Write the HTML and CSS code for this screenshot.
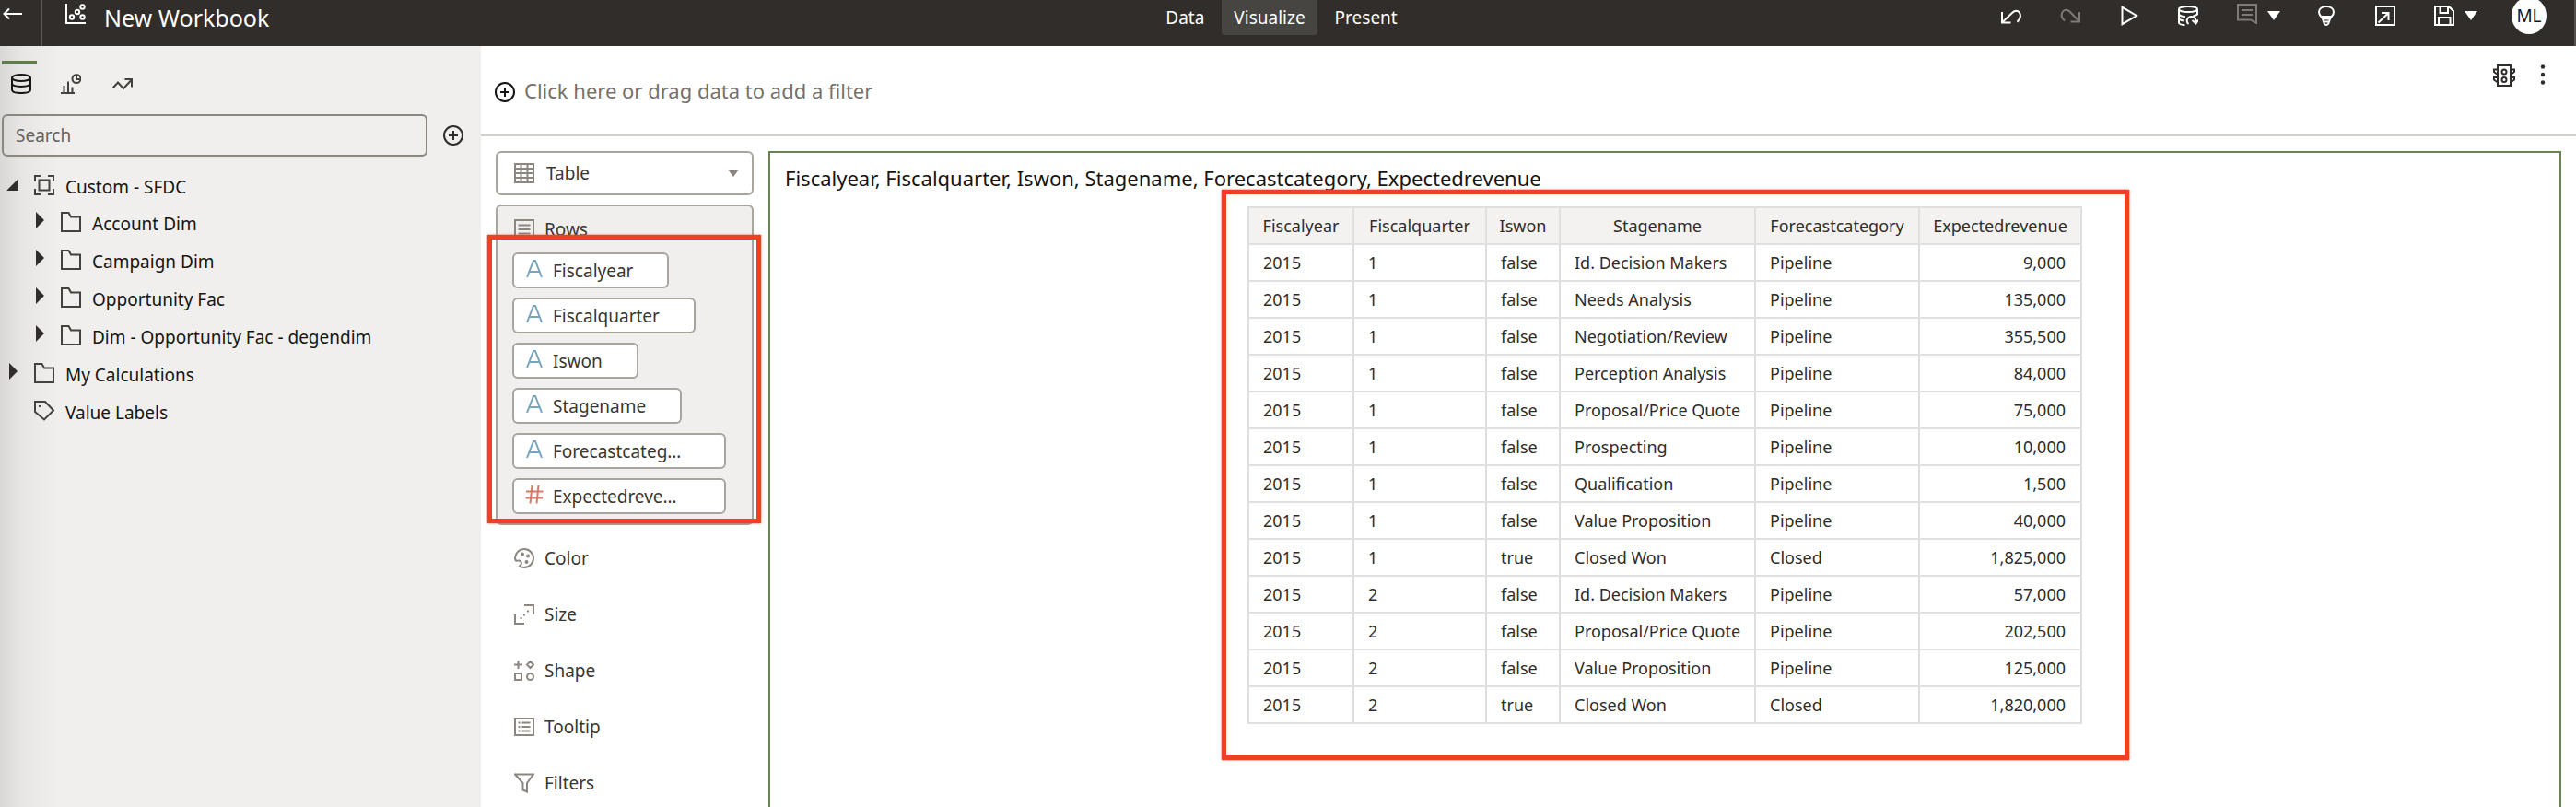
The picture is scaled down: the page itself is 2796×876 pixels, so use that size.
FILE: index.html
```html
<!DOCTYPE html>
<html lang="en">
<head>
<meta charset="utf-8">
<title>New Workbook</title>
<link rel="stylesheet" href="styles.css">
</head>
<body>
<header class="topbar">
  <div class="topbar-left">
    <button class="icon-btn back" aria-label="Back"><svg class="icon" viewBox="0 0 22 22"><path d="M21 11H2M7 5.500L1.500 11L7 16.500"/></svg></button>
    <svg class="icon book-icon" viewBox="0 0 22 22"><path d="M1 0V21H22"/><circle cx="7" cy="14.500" r="2.200"/><circle cx="13" cy="9" r="2.200"/><circle cx="18.500" cy="14.500" r="2.200"/><circle cx="18.500" cy="3.500" r="2.200"/></svg>
    <h1 class="book-title">New Workbook</h1>
  </div>
  <nav class="modes">
    <button class="mode">Data</button>
    <button class="mode mode-active">Visualize</button>
    <button class="mode">Present</button>
  </nav>
  <div class="actions">
    <button class="icon-btn" aria-label="Undo"><svg class="icon" viewBox="0 0 22 22"><path d="M1 7V18.500H10.500M1.500 18L12.500 7.500C15 5 18 5 19.800 7.500C21.500 10 21.500 13.500 17.500 17.800"/></svg></button>
    <button class="icon-btn dim" aria-label="Redo"><svg class="icon" viewBox="0 0 22 22"><path d="M21 7V17.500H11.500M20.500 17L10.500 6.500C8 4 5 4 3 6.500C.8 9.500 1 13 5 16.500"/></svg></button>
    <button class="icon-btn" aria-label="Play"><svg class="icon" viewBox="0 0 22 22"><path d="M3.500 1.800V20.200L19 11Z"/></svg></button>
    <button class="icon-btn" aria-label="Refresh data"><svg class="icon" viewBox="0 0 22 22"><ellipse cx="11" cy="4" rx="10" ry="3"/><path d="M1 4V19C2 20.500 4.500 21 7.500 21.200M1 9.500C2 11 5 12 8 12.300M1 14.500C2 15.500 4 16.200 6 16.500M21 4V10M21 9.500C20 10.500 18 11 16.500 11.500M11.500 20C8 17 10 12 14.500 12C18 12 20 15 19.500 18.500M15.500 16L19.500 19.500L22 15.500"/></svg></button>
    <span class="action-pair">
      <button class="icon-btn dim" aria-label="Comments"><svg class="icon icon-raised" viewBox="0 0 22 22"><path d="M1 1H21V21L15 17.500H1ZM5 7H17M5 12H17"/></svg></button>
      <button class="icon-btn" aria-label="Comment options"><svg class="caret" viewBox="0 0 14 10"><path d="M0 0H14L7 10Z"/></svg></button>
    </span>
    <button class="icon-btn" aria-label="Insights"><svg class="icon" viewBox="0 0 22 22"><path d="M7 14.500C6.500 12.500 3 11.500 3 7C3 3 7 1 11 1S19 3 19 7C19 11.500 15.500 12.500 15 14.500ZM5.500 12H16.500M7 14.500L8.500 19C9.500 21.500 12.500 21.500 13.500 19L15 14.500M8.500 17.500H13.500"/></svg></button>
    <button class="icon-btn" aria-label="Export"><svg class="icon" viewBox="0 0 22 22"><path d="M1 1H21V21H1ZM3.500 18.500L14 8.500M7 8H14.500V16"/></svg></button>
    <span class="action-pair">
      <button class="icon-btn" aria-label="Save"><svg class="icon" viewBox="0 0 22 22"><path d="M1 1H16L21 6V21H1ZM6.500 1V8H15V1M5 21V13H17.500V21"/></svg></button>
      <button class="icon-btn" aria-label="Save options"><svg class="caret" viewBox="0 0 14 10"><path d="M0 0H14L7 10Z"/></svg></button>
    </span>
    <button class="avatar">ML</button>
  </div>
</header>

<div class="workspace">
  <aside class="sidebar">
    <div class="side-tabs">
      <button class="side-tab side-tab-active" aria-label="Data"><svg class="icon" viewBox="0 0 22 22"><ellipse cx="11" cy="4.500" rx="10" ry="3.500"/><path d="M1 4.500V17.500C1 22.200 21 22.200 21 17.500V4.500M1 10.500C1 15 21 15 21 10.500"/></svg></button>
      <button class="side-tab" aria-label="Visualizations"><svg class="icon" viewBox="0 0 22 22"><path d="M0 21H15M3.500 21V13M8 21V8.500M12.500 21V14.500"/><circle cx="17" cy="5.500" r="4.500"/><path d="M17 1V6H21.500"/></svg></button>
      <button class="side-tab" aria-label="Analytics"><svg class="icon" viewBox="0 0 22 22"><path d="M.5 15.500L6 9.500L12 16L20.500 7M13.500 6H21V14.500"/></svg></button>
    </div>
    <div class="search-row">
      <input class="search" type="text" placeholder="Search" aria-label="Search">
      <button class="icon-btn" aria-label="Add"><svg class="icon" viewBox="0 0 22 22"><circle cx="11" cy="11" r="10"/><path d="M11 6V16M6 11H16"/></svg></button>
    </div>
    <ul class="tree">
      <li class="node node-root"><svg class="twist" viewBox="0 0 14 18"><path d="M14 4V17H1Z"/></svg><svg class="icon" viewBox="0 0 22 22"><path d="M1 7V1H7M15 1H21V7M21 15V21H15M7 21H1V15M5.500 5.500H16.500V16.500H5.500Z"/></svg><span>Custom - SFDC</span></li>
      <li class="node node-child"><svg class="twist" viewBox="0 0 14 18"><path d="M4 0V18L13 9Z"/></svg><svg class="icon" viewBox="0 0 22 22"><path d="M1 1H8.500L11 5.500H21V21H1Z"/></svg><span>Account Dim</span></li>
      <li class="node node-child"><svg class="twist" viewBox="0 0 14 18"><path d="M4 0V18L13 9Z"/></svg><svg class="icon" viewBox="0 0 22 22"><path d="M1 1H8.500L11 5.500H21V21H1Z"/></svg><span>Campaign Dim</span></li>
      <li class="node node-child"><svg class="twist" viewBox="0 0 14 18"><path d="M4 0V18L13 9Z"/></svg><svg class="icon" viewBox="0 0 22 22"><path d="M1 1H8.500L11 5.500H21V21H1Z"/></svg><span>Opportunity Fac</span></li>
      <li class="node node-child"><svg class="twist" viewBox="0 0 14 18"><path d="M4 0V18L13 9Z"/></svg><svg class="icon" viewBox="0 0 22 22"><path d="M1 1H8.500L11 5.500H21V21H1Z"/></svg><span>Dim - Opportunity Fac - degendim</span></li>
      <li class="node"><svg class="twist" viewBox="0 0 14 18"><path d="M4 0V18L13 9Z"/></svg><svg class="icon" viewBox="0 0 22 22"><path d="M1 1H8.500L11 5.500H21V21H1Z"/></svg><span>My Calculations</span></li>
      <li class="node"><svg class="twist" viewBox="0 0 14 18"></svg><svg class="icon" viewBox="0 0 22 22"><path d="M1 1H12L21 10.500L11 20.500L1 12Z"/><path d="M5 6H7"/></svg><span>Value Labels</span></li>
    </ul>
  </aside>

  <main class="main">
    <div class="filter-bar">
      <button class="add-filter"><svg class="icon" viewBox="0 0 22 22"><circle cx="11" cy="11" r="10"/><path d="M11 6V16M6 11H16"/></svg><span>Click here or drag data to add a filter</span></button>
      <div class="filter-tools">
        <button class="icon-btn" aria-label="Auto-apply filters"><svg class="icon icon-lg" viewBox="0 0 24 24"><path d="M5 1H19V23H5Z"/><circle cx="12" cy="8" r="2.500"/><circle cx="12" cy="16.500" r="2.500"/><path d="M5 5.500H1V8L5 11M5 14H1V16.500L5 19.500M19 5.500H23V8L19 11M19 14H23V16.500L19 19.500"/></svg></button>
        <button class="icon-btn" aria-label="More"><svg class="icon dots" viewBox="0 0 22 22"><circle cx="11" cy="2.500" r="2.200"/><circle cx="11" cy="11" r="2.200"/><circle cx="11" cy="19.500" r="2.200"/></svg></button>
      </div>
    </div>

    <div class="content">
      <section class="grammar">
        <label class="type-box">
          <svg class="icon" viewBox="0 0 22 22"><path d="M1 1H21V21H1ZM1 6H21M1 11H21M1 16H21M7.500 1V21M14.500 1V21"/></svg>
          <select class="type-select" aria-label="Visualization type"><option>Table</option></select>
          <svg class="caret caret-sm" viewBox="0 0 12 8"><path d="M0 0H12L6 8Z"/></svg>
        </label>
        <div class="rows-box">
          <div class="slot-head"><svg class="icon" viewBox="0 0 22 22"><path d="M1 1H21V21H1ZM4.500 6.500H17.500M4.500 11H17.500M4.500 15.500H17.500"/></svg><span>Rows</span></div>
          <div class="chips">
            <button class="chip"><svg class="chip-icon" viewBox="0 0 20 20"><path d="M2 19L9 1H11L18 19M4.500 13H15.500"/></svg>Fiscalyear</button>
            <button class="chip"><svg class="chip-icon" viewBox="0 0 20 20"><path d="M2 19L9 1H11L18 19M4.500 13H15.500"/></svg>Fiscalquarter</button>
            <button class="chip"><svg class="chip-icon" viewBox="0 0 20 20"><path d="M2 19L9 1H11L18 19M4.500 13H15.500"/></svg>Iswon</button>
            <button class="chip"><svg class="chip-icon" viewBox="0 0 20 20"><path d="M2 19L9 1H11L18 19M4.500 13H15.500"/></svg>Stagename</button>
            <button class="chip chip-long"><svg class="chip-icon" viewBox="0 0 20 20"><path d="M2 19L9 1H11L18 19M4.500 13H15.500"/></svg>Forecastcateg…</button>
            <button class="chip chip-long"><svg class="chip-icon chip-number" viewBox="0 0 20 20"><path d="M7.500 0L5.500 19.500M14.500 0L12.500 19.500M1 6.500H19.500M.5 13.500H19"/></svg>Expectedreve…</button>
          </div>
          <div class="mark mark-rows"></div>
        </div>
        <ul class="slots">
          <li class="slot"><svg class="icon" viewBox="0 0 22 22"><path d="M1 10.500C1.500 5 5.500 1 11 1C16.500 1 21 5.500 21 11S16.500 21 11 21C9 21 7 20.500 6 19.500C8 18 8.500 15.500 7 14C5.500 12.500 3 14.500 2 13.500C1 12.500 1 11.500 1 10.500Z"/><g class="solid"><circle cx="9" cy="6.500" r="2"/><circle cx="15" cy="8.500" r="2"/><circle cx="13.500" cy="15" r="2"/></g></svg><span>Color</span></li>
          <li class="slot"><svg class="icon" viewBox="0 0 22 22"><path d="M11 1H21V11M1 11V21H11M6.500 15H8.500M10 11.500H12M14 7.500H16"/></svg><span>Size</span></li>
          <li class="slot"><svg class="icon" viewBox="0 0 22 22"><path d="M4.500 0V9M0 4.500H9M17.500 1L21 4.500L17.500 8L14 4.500ZM1 14H8V21H1Z"/><circle cx="17.500" cy="17.500" r="3.500"/></svg><span>Shape</span></li>
          <li class="slot"><svg class="icon" viewBox="0 0 22 22"><path d="M1 2H21V20H1ZM4.500 6.500H6.500M8.500 6.500H17.500M4.500 11H6.500M8.500 11H17.500M4.500 15.500H6.500M8.500 15.500H17.500"/></svg><span>Tooltip</span></li>
          <li class="slot"><svg class="icon" viewBox="0 0 22 22"><path d="M1 1.500H21L14 11V20.500L9.500 18.500V11Z"/></svg><span>Filters</span></li>
        </ul>
      </section>

      <section class="canvas">
        <h2 class="viz-title">Fiscalyear, Fiscalquarter, Iswon, Stagename, Forecastcategory, Expectedrevenue</h2>
        <div class="table-wrap">
          <table class="grid">
            <colgroup><col class="c-year"><col class="c-quarter"><col class="c-won"><col class="c-stage"><col class="c-cat"><col class="c-rev"></colgroup>
            <thead><tr><th>Fiscalyear</th><th>Fiscalquarter</th><th>Iswon</th><th>Stagename</th><th>Forecastcategory</th><th>Expectedrevenue</th></tr></thead>
            <tbody>
              <tr><td>2015</td><td>1</td><td>false</td><td>Id. Decision Makers</td><td>Pipeline</td><td class="num">9,000</td></tr>
              <tr><td>2015</td><td>1</td><td>false</td><td>Needs Analysis</td><td>Pipeline</td><td class="num">135,000</td></tr>
              <tr><td>2015</td><td>1</td><td>false</td><td>Negotiation/Review</td><td>Pipeline</td><td class="num">355,500</td></tr>
              <tr><td>2015</td><td>1</td><td>false</td><td>Perception Analysis</td><td>Pipeline</td><td class="num">84,000</td></tr>
              <tr><td>2015</td><td>1</td><td>false</td><td>Proposal/Price Quote</td><td>Pipeline</td><td class="num">75,000</td></tr>
              <tr><td>2015</td><td>1</td><td>false</td><td>Prospecting</td><td>Pipeline</td><td class="num">10,000</td></tr>
              <tr><td>2015</td><td>1</td><td>false</td><td>Qualification</td><td>Pipeline</td><td class="num">1,500</td></tr>
              <tr><td>2015</td><td>1</td><td>false</td><td>Value Proposition</td><td>Pipeline</td><td class="num">40,000</td></tr>
              <tr><td>2015</td><td>1</td><td>true</td><td>Closed Won</td><td>Closed</td><td class="num">1,825,000</td></tr>
              <tr><td>2015</td><td>2</td><td>false</td><td>Id. Decision Makers</td><td>Pipeline</td><td class="num">57,000</td></tr>
              <tr><td>2015</td><td>2</td><td>false</td><td>Proposal/Price Quote</td><td>Pipeline</td><td class="num">202,500</td></tr>
              <tr><td>2015</td><td>2</td><td>false</td><td>Value Proposition</td><td>Pipeline</td><td class="num">125,000</td></tr>
              <tr><td>2015</td><td>2</td><td>true</td><td>Closed Won</td><td>Closed</td><td class="num">1,820,000</td></tr>
            </tbody>
          </table>
          <div class="mark mark-table"></div>
        </div>
      </section>
    </div>
  </main>
</div>
</body>
</html>
```
FILE: styles.css
```css
* { box-sizing: border-box; }
body {
  margin: 0;
  height: 100vh;
  overflow: hidden;
  display: flex;
  flex-direction: column;
  font-family: "Noto Sans", "Open Sans", sans-serif;
  font-size: 19px;
  color: #161513;
  background: #fff;
}
button, input, select { font: inherit; color: inherit; }
button { border: 0; padding: 0; background: none; }
ul { list-style: none; margin: 0; padding: 0; }
h1, h2 { margin: 0; font-weight: 400; }

.icon {
  display: block;
  flex: none;
  width: 22px;
  height: 22px;
  fill: none;
  stroke: currentColor;
  stroke-width: 2;
}
.icon-lg { width: 24px; height: 24px; }
.icon-raised { margin-bottom: 4px; }
.icon-btn { display: flex; flex: none; }
.solid, .dots { fill: currentColor; stroke: none; }
.caret { display: block; width: 14px; height: 10px; fill: currentColor; }
.caret-sm { width: 12px; height: 8px; color: #8b8680; }

/* Top bar */
.topbar {
  flex: none;
  display: grid;
  grid-template-columns: 1fr auto 1fr;
  height: 50px;
  background: #312d2a;
  border-right: 2px solid #55514e;
  color: #fff;
}
.topbar-left { display: flex; align-items: flex-start; }
.back { height: 50px; width: 46px; padding: 4px 3px; border-right: 2px solid #5b5856; }
.book-icon { margin: 4px 20px 0 25px; }
.book-title { font-size: 25px; line-height: 38px; }
.modes { display: flex; align-items: flex-start; gap: 6px; padding-right: 12px; }
.mode { height: 38px; padding: 0 13px; border-radius: 0 0 4px 4px; }
.mode-active { background: #474541; }
.actions {
  display: flex;
  justify-content: flex-end;
  align-items: center;
  gap: 42px;
  height: 34px;
  padding-right: 30px;
}
.action-pair { display: flex; align-items: center; gap: 11px; margin-right: -3px; }
.dim { color: #7d7a77; }
.avatar {
  flex: none;
  width: 38px;
  height: 40px;
  margin-left: -2px;
  border-radius: 50%;
  background: #fff;
  color: #161513;
}

.workspace { flex: 1; display: flex; min-height: 0; }

/* Data panel */
.sidebar {
  flex: none;
  width: 522px;
  background: linear-gradient(90deg, #d9d8d6, #e7e6e4 24px, #f0efed 64px);
}
.side-tabs { display: flex; gap: 18px; padding: 16px 2px 0; color: #45413c; }
.side-tab { width: 38px; height: 38px; padding: 8px 8px 0; border-top: 4px solid transparent; }
.side-tab-active { border-color: #5f7d4f; color: #161513; padding-left: 10px; padding-right: 6px; }
.search-row { display: flex; align-items: center; gap: 17px; padding: 20px 19px 0 2px; color: #312d2a; }
.search {
  flex: 1;
  min-width: 0;
  height: 46px;
  padding: 0 13px;
  border: 2px solid #8b8680;
  border-radius: 6px;
  background: transparent;
}
.search::placeholder { color: #65615c; opacity: 1; }
.tree { padding: 13px 6px; }
.node { display: flex; align-items: center; height: 41px; }
.node-root { height: 39px; }
.node-child { padding-left: 29px; }
.node .icon { margin: 0 12px 4px 17px; color: #45413c; }
.twist { flex: none; width: 14px; height: 18px; margin-bottom: 7px; fill: #312d2a; }

/* Main area */
.main { flex: 1; min-width: 0; display: flex; flex-direction: column; }
.filter-bar {
  flex: none;
  display: flex;
  justify-content: space-between;
  height: 98px;
  padding: 0 25px 0 15px;
  border-bottom: 2px solid #d3cfc9;
}
.add-filter { display: flex; align-items: center; gap: 10px; font-size: 22px; }
.add-filter span { color: #76716b; line-height: 30px; }
.add-filter .icon { margin-top: 4px; }
.filter-tools { display: flex; align-items: flex-start; gap: 19px; padding-top: 20px; color: #312d2a; }
.content { flex: 1; min-height: 0; display: flex; gap: 16px; padding: 16px 16px 0; }

/* Grammar panel */
.grammar { flex: none; width: 280px; color: #3a3631; }
.grammar .icon { color: #8b8680; }
.type-box {
  display: flex;
  align-items: center;
  height: 48px;
  padding: 0 14px 0 18px;
  border: 2px solid #a8a49e;
  border-radius: 6px;
}
.type-select { flex: 1; appearance: none; border: 0; padding: 0 13px; background: transparent; }
.rows-box {
  position: relative;
  height: 348px;
  margin-top: 10px;
  padding: 11px 16px 10px;
  border: 2px solid #a8a49e;
  border-radius: 6px;
  background: #f0efed;
}
.slot-head { display: flex; align-items: center; gap: 11px; height: 28px; padding-left: 2px; }
.chips { display: flex; flex-direction: column; align-items: flex-start; gap: 10px; margin-top: 11px; }
.chip {
  display: flex;
  align-items: center;
  height: 39px;
  padding: 0 37px 0 12px;
  border: 2px solid #a8a49e;
  border-radius: 6px;
  background: #fff;
}
.chip-long { width: 232px; padding-right: 0; }
.chip-icon { width: 20px; height: 20px; margin: 0 10px 4px 0; fill: none; stroke: #76a5bd; stroke-width: 2; }
.chip-number { stroke: #d67b69; }
.slots { padding: 5px 20px; }
.slot { display: flex; align-items: center; gap: 11px; height: 61px; }

/* Canvas */
.canvas { flex: 1; min-width: 0; border: 2px solid #688351; border-bottom: 0; }
.viz-title { padding: 12px 16px 0; font-size: 22px; line-height: 30px; }
.table-wrap { position: relative; width: fit-content; margin: 16px auto 0; }
.grid { border-collapse: collapse; table-layout: fixed; width: 906px; font-size: 18px; color: #2f2c29; }
.grid th, .grid td { height: 40px; padding: 0 0 0 15px; border: 2px solid #dfdfdf; font-weight: 400; text-align: left; white-space: nowrap; line-height: 24px; }
.grid th { background: #f3f2f1; padding: 0; text-align: center; }
.grid .num { text-align: right; padding: 0 16px 0 0; }
.c-year { width: 114px; }
.c-quarter { width: 144px; }
.c-won { width: 80px; }
.c-stage { width: 212px; }
.c-cat { width: 178px; }
.c-rev { width: 176px; }

/* Highlight frames over the panels */
.mark { position: absolute; border: 5px solid #ee4023; box-shadow: 0 0 2px #ee4023; pointer-events: none; }
.mark-rows { inset: 31px -10px 0 -11px; }
.mark-table { inset: -18px -51px -39px -28px; }
```
